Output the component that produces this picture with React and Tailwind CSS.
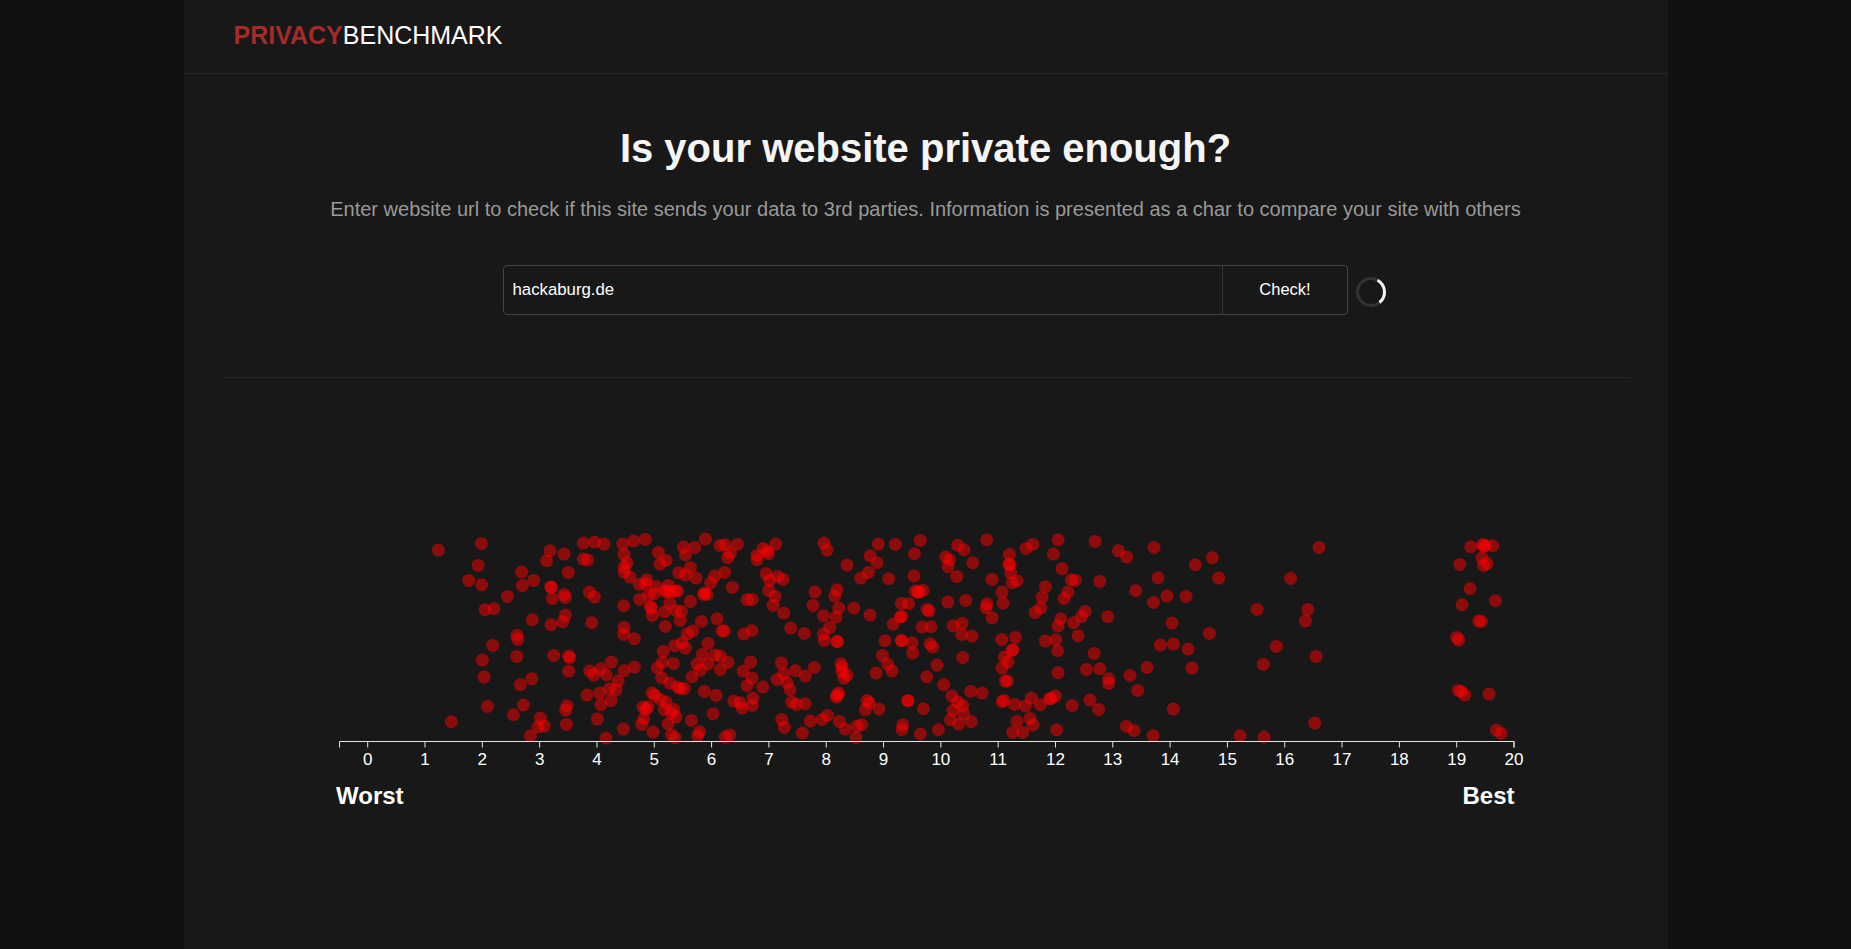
const raw3 = `354,89 483,69 689,91 731,101 789,68 823,65 851,71 907,71 940,62 975,57 1155,56 1089,80 1123,81 1199,75 1095,103 1014,96 1037,120 1019,131 911,102 679,121 789,116 802,119 473,135 920,127 912,140 911,155 1110,141 1075,157 1095,164 1127,173 604,155 744,156 445,180 484,193 606,195 640,180 692,200 692,200 929,170 957,192 979,178 975,190 1007,198 1044,195 1183,167 1171,188 561,228 696,235 731,222 735,231 807,215 822,230 1002,220 985,224 1040,213 1050,213 1065,212 1072,212 1035,212 1150,222 1160,222 1152,218 958,237 1048,248 1110,243 494,268 521,265 910,256 990,258 993,263 1033,274 1066,270 1083,273 636,298 692,313 727,304 735,284 814,307 996,285 1080,300 1143,303 1190,295 1035,318 911,321 910,342 942,355 590,345 592,357 1117,332 1101,341 1205,331 517,375 1085,367 1063,376 1095,383 1163,369 1029,393 589,408 486,419 700,405 745,407 748,412 1146,402 1183,404 1200,407 1026,426 1059,429 1130,431 1163,430 873,425 942,440 1011,443 1140,449 1200,447 808,452 841,445 820,464 858,463 911,451 745,452 491,470 634,475 600,493 1024,472 1115,469 893,482 1048,488 867,505 887,509 1072,500 1080,505 1092,504 1152,513 1187,525 800,524 838,518 995,518 1003,525 1020,537 872,540 842,553 1037,546 501,558 609,554 740,556 736,569 968,560 983,560 977,567 1032,568 1060,567 1053,578 1067,590 579,583 1178,580 660,593 653,620 672,617 738,612 831,596 970,595 964,612 1043,610 1113,600 393,604 909,626 998,635 1053,643 1064,652 1138,634 1132,646 630,646 857,653`;
const raw4 = `74,73 111,72 90,98 82,112 73,156 96,201 140,238 155,237 72,332 130,341 155,331 83,426 151,425 128,452 155,473 140,496 187,500 100,542 119,547 158,533 125,563 156,555 88,644 75,650 170,105 170,118 188,84 200,92 204,100 226,71 197,160 208,180 232,168 248,177 205,210 224,228 218,255 250,278 271,323 312,339 243,428 250,460 285,451 315,467 342,441 230,477 260,487 269,508 274,545 288,552 314,550 244,597 252,621 306,638 330,602 365,597 381,585 371,68 380,89 440,134 344,215 410,208 403,227 338,255 415,263 369,286 407,290 388,321 369,341 372,360 410,363 411,364 460,263 509,284 534,71 585,72 660,60 642,100 509,106 530,127 504,156 481,173 565,175 641,166 645,212 668,210 653,215 655,215 603,249 625,250 742,245 796,240 680,267 686,272 600,290 604,288 578,311 665,320 692,319 554,361 603,360 604,361 635,367 689,370 697,380 637,398 546,405 562,431 575,452 527,458 710,434 679,469 422,430 425,440 425,455 440,464 431,473 787,411 730,493 755,527 772,545 787,555 811,513 845,518 415,518 408,530 410,524 500,540 507,547 495,568 536,566 622,541 623,541 669,565 758,570 790,581 750,598 775,611 813,604 417,603 435,626 467,651 470,617 484,613 607,613 605,628 660,641 714,628 772,75 791,88 859,58 736,110 748,118 743,138 817,127 769,168 875,177 927,102 925,132 929,132 931,157 935,187 950,182 905,215 908,248 860,250 857,262 875,292 977,84 997,72 1073,58 1059,101 1085,145 1113,178 1125,180 1198,183 1184,63 1035,199 1025,231 1103,215 1091,235 1021,263 1004,276 1154,273 1143,289 1081,295 1120,307 1073,317 758,316 785,309 784,342 815,347 904,357 945,351 935,390 938,388 1035,362 1066,358 1133,346 1072,391 912,410 923,425 905,443 1181,399 1158,447 1198,445 1073,457 915,482 921,482 905,544 911,540 943,552 975,557 993,533 1020,553 1048,535 1065,527 1052,534 1115,555 1169,539 1195,567 950,603 989,594 998,614 937,636 967,636 1069,628`;
const raw5 = `54,91 79,110 161,81 285,133 336,112 656,81 1111,79 1147,72 1155,75 1150,78 1177,76 1145,113 1160,130 1150,135 1078,132 173,172 355,173 571,174 106,211 200,227 257,228 159,246 470,267 622,267 615,302 1109,205 1185,241 1085,253 1135,302 1143,303 22,289 215,308 327,339 1069,351 1075,359 180,374 219,371 263,386 528,378 647,408 140,441 275,443 489,432 89,465 25,475 25,489 112,510 1074,510 1083,513 1093,524 1166,521 219,566 78,618 101,630 158,646 419,646 491,650 643,608 1188,629 1202,639`;

const CHART_LEFT = 336;
const parse = (raw, originX) =>
  raw.split(/\s+/).map((pair) => {
    const [x, y] = pair.split(",").map(Number);
    return { cx: originX + x / 3 - CHART_LEFT + 0.4, cy: y / 3 + 0.4 };
  });
const dots = [...parse(raw3, 320), ...parse(raw4, 700), ...parse(raw5, 1100)];

const x0 = 367.7 - CHART_LEFT;
const unit = 57.315;
const ticks = Array.from({ length: 21 }, (_, i) => i);
const axisY = 221.5;

function Chart() {
  return (
    <svg width="1179" height="250" className="block overflow-visible">
      {dots.map((d, i) => (
        <circle key={i} cx={d.cx} cy={d.cy} r="6.5" fill="#ff0000" fillOpacity="0.5" />
      ))}
      <path
        d={`M${x0 - 0.5 * unit + 0.5},${axisY + 6}V${axisY}H${x0 + 20 * unit}V${axisY + 6}`}
        fill="none"
        stroke="#e5e5e5"
        strokeWidth="1"
      />
      {ticks.map((t) => (
        <g key={t} transform={`translate(${x0 + t * unit},${axisY})`}>
          <line y2="6" stroke="#e5e5e5" />
          <text y="23" textAnchor="middle" fill="#ffffff" fontSize="17" fontFamily="'Liberation Sans', sans-serif">
            {t}
          </text>
        </g>
      ))}
    </svg>
  );
}

function Spinner() {
  return (
    <svg width="32" height="32" viewBox="0 0 32 32" className="block">
      <circle cx="16" cy="16" r="13.5" fill="none" stroke="#333333" strokeWidth="3" />
      <path d="M 22.5 4.2 A 13.5 13.5 0 0 1 24.5 26.5" fill="none" stroke="#f2f2f2" strokeWidth="3" />
    </svg>
  );
}

export default function App() {
  return (
    <div className="min-h-screen bg-[#111111] font-['Liberation_Sans',Arial,sans-serif] text-white">
      <div className="mx-auto min-h-screen w-[1484px] bg-[#181818]">
        <header className="flex h-[74px] items-center border-b border-[#262626] pb-0.5 pl-[50px] text-[25px]">
          <span className="font-bold text-[#a52a2a]">PRIVACY</span>
          <span>BENCHMARK</span>
        </header>

        <main className="px-[38px]">
          <h1 className="mt-[50px] text-center text-[40px] leading-[48px] font-bold text-[#f5f5f5]">
            Is your website private enough?
          </h1>
          <p className="mt-[22px] text-center text-xl leading-[30px] text-[#999999]">
            Enter website url to check if this site sends your data to 3rd parties. Information is presented as a char to compare your site with others
          </p>

          <div className="mt-[41px] grid grid-cols-[1fr_845px_1fr] items-center gap-[7px]">
            <div />
            <div className="flex h-[50px] overflow-hidden rounded border border-[#444444]">
              <input
                readOnly
                value="hackaburg.de"
                className="min-w-0 flex-1 bg-transparent pr-2 pl-[8.5px] text-[16.8px] text-white outline-none"
              />
              <button className="w-[125px] border-l border-[#333333] pb-0.5 text-[16.5px] text-white">Check!</button>
            </div>
            <div className="mt-1">
              <Spinner />
            </div>
          </div>

          <div className="mt-[62px] h-px bg-[#262626]" />

          <section className="mx-auto mt-[142px] w-[1179px]">
            <Chart />
            <div className="mt-[10px] flex justify-between pr-[0.5px] text-2xl leading-[32px] font-bold">
              <span>Worst</span>
              <span>Best</span>
            </div>
          </section>
        </main>
      </div>
    </div>
  );
}
